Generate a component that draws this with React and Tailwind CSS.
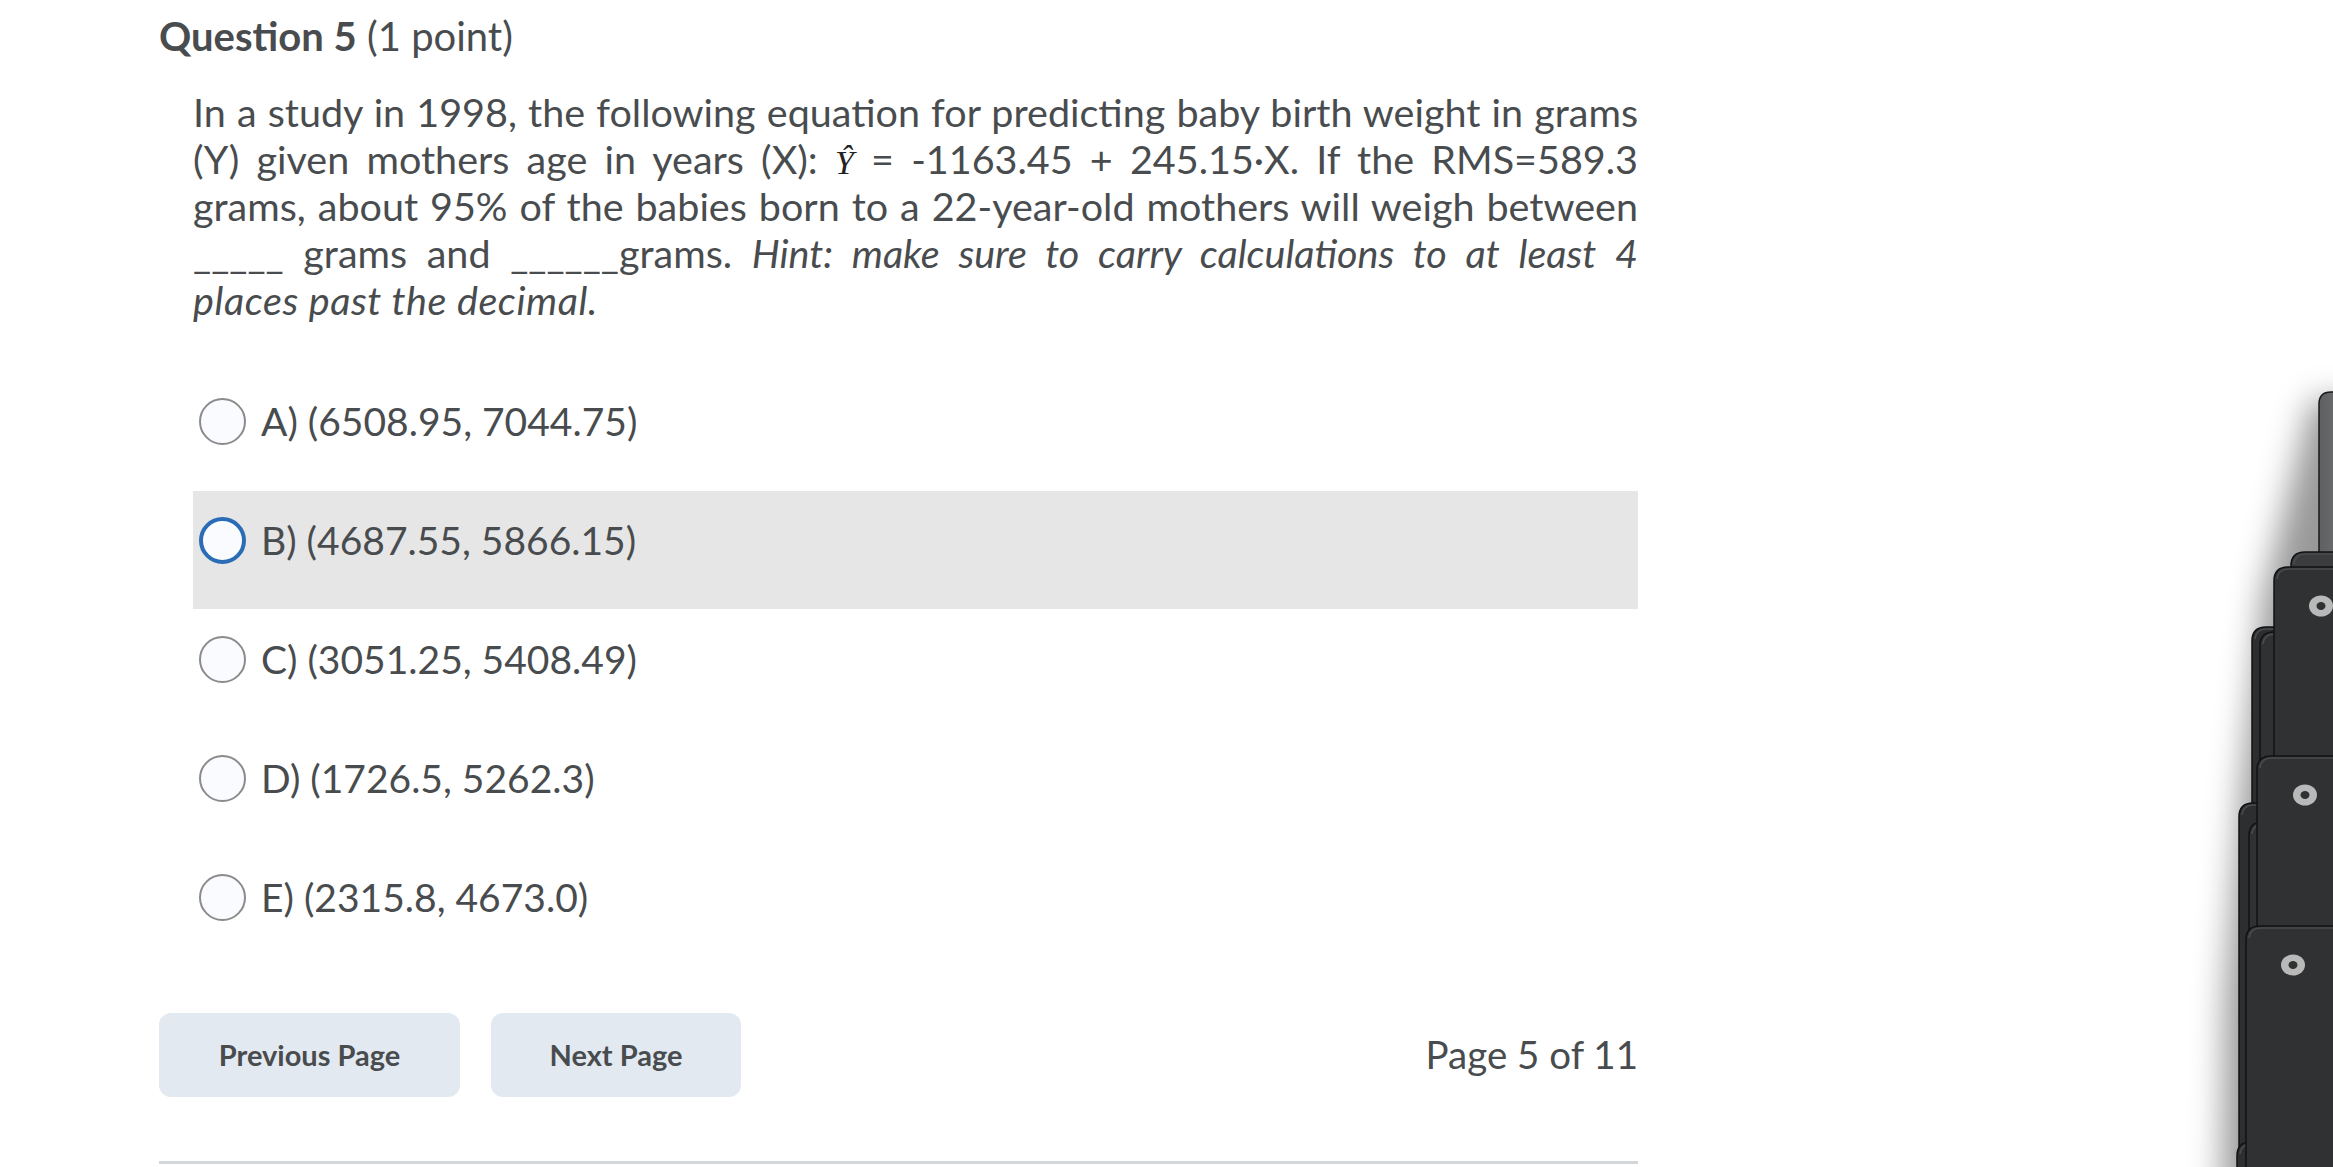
import React from 'react';

const options = [
  { id: 'A', label: 'A) (6508.95, 7044.75)' },
  { id: 'B', label: 'B) (4687.55, 5866.15)', hover: true },
  { id: 'C', label: 'C) (3051.25, 5408.49)' },
  { id: 'D', label: 'D) (1726.5, 5262.3)' },
  { id: 'E', label: 'E) (2315.8, 4673.0)' },
];

const Card = ({ x, y, fill = '#2f3133', ring }) => (
  <g>
    <path
      d={`M ${x} 1200 L ${x} ${y + 14} Q ${x} ${y} ${x + 14} ${y} L 2360 ${y} L 2360 1200 Z`}
      fill={fill}
      stroke="#111213"
      strokeWidth="1.5"
    />
    <path d={`M ${x + 3} ${y + 12} Q ${x + 4} ${y + 2} ${x + 15} ${y + 2} L 2360 ${y + 2}`} fill="none" stroke="#4a4c4e" strokeWidth="1.5" />
    {ring && (
      <g>
        <ellipse cx={ring[0]} cy={ring[1]} rx="12" ry="10.5" fill="#b9b9b9" />
        <ellipse cx={ring[0]} cy={ring[1]} rx="4.5" ry="4" fill="#2f3133" />
      </g>
    )}
  </g>
);

const DockStack = () => (
  <svg className="absolute right-0 top-0" width="180" height="1167" viewBox="2153 0 180 1167">
    <defs>
      <filter id="soft" x="-60%" y="-20%" width="220%" height="140%">
        <feGaussianBlur stdDeviation="16" />
      </filter>
      <linearGradient id="bar" x1="0" y1="0" x2="1" y2="0">
        <stop offset="0" stopColor="#5e5f60" />
        <stop offset="1" stopColor="#7b7c7d" />
      </linearGradient>
    </defs>
    <path d="M 2312 400 L 2262 600 L 2240 800 L 2225 1000 L 2222 1200 L 2360 1200 L 2360 400 Z" fill="rgba(0,0,0,0.4)" filter="url(#soft)" />
    <path d="M 2319 560 L 2319 404 Q 2319 392 2331 392 L 2360 392 L 2360 560 Z" fill="url(#bar)" stroke="#1a1a1a" strokeWidth="1.5" />
    <Card x={2291} y={552} fill="#3a3c3e" />
    <Card x={2252} y={627} fill="#2c2e30" />
    <Card x={2260} y={632} />
    <Card x={2274} y={567} ring={[2321, 606]} />
    <Card x={2239} y={803} fill="#2c2e30" />
    <Card x={2249} y={822} />
    <Card x={2257} y={756} ring={[2305, 795]} />
    <Card x={2237} y={1142} fill="#2c2e30" />
    <Card x={2246} y={926} ring={[2293, 965]} />
  </svg>
);

const App = () => {
  return (
    <div className="relative h-[1167px] w-[2333px] overflow-hidden bg-white font-['Lato',sans-serif] text-[#494c4e]">
      <div className="ml-[159px] w-[1479px] pt-[12px]">
        <h2 className="text-[40px] leading-[48px]">
          <span className="font-bold">Question 5</span> (1 point)
        </h2>

        {/* question text */}
        <div className="mt-[28px] pl-[34px] text-[39.5px] leading-[47px]">
          <div className="whitespace-nowrap text-justify [text-align-last:justify]">
            In a study in 1998, the following equation for predicting baby birth weight in grams
          </div>
          <div className="whitespace-nowrap text-justify [text-align-last:justify]">
            (Y) given mothers age in years (X):{' '}
            <span className="font-['Liberation_Serif',serif] text-[34px] italic leading-none text-[#222]">Ŷ</span> = -1163.45 + 245.15·X. If the RMS=589.3
          </div>
          <div className="whitespace-nowrap text-justify [text-align-last:justify]">
            grams, about 95% of the babies born to a 22-year-old mothers will weigh between
          </div>
          <div className="whitespace-nowrap text-justify [text-align-last:justify]">
            _____ grams and ______grams. <em>Hint: make sure to carry calculations to at least 4</em>
          </div>
          <div>
            <em className="tracking-[0.6px]">places past the decimal.</em>
          </div>
        </div>

        {/* answers */}
        <div className="mt-[49px] pl-[34px]">
          {options.map((opt) => (
            <div
              key={opt.id}
              className={
                opt.hover
                  ? 'mb-[1px] flex h-[118px] items-start gap-[15px] bg-[#e6e6e6] pl-[6px] pt-[26px]'
                  : 'mb-[1px] flex h-[118px] items-start gap-[15px] pl-[6px] pt-[26px]'
              }
            >
              <span
                className={
                  opt.hover
                    ? 'h-[47px] w-[47px] shrink-0 rounded-full border-[4px] border-[#2a6cb5] bg-[#f9fbff]'
                    : 'h-[47px] w-[47px] shrink-0 rounded-full border-2 border-[#8b8b8b] bg-[#f9fbff]'
                }
              />
              <span className="text-[39px] leading-[47px]">{opt.label}</span>
            </div>
          ))}
        </div>

        {/* pager */}
        <div className="mt-[47px] flex items-center">
          <button className="h-[84px] w-[301px] rounded-[12px] bg-[#e3e9f1] text-[29px] font-bold text-[#494c4e]">
            Previous Page
          </button>
          <button className="ml-[31px] h-[84px] w-[250px] rounded-[12px] bg-[#e3e9f1] text-[29px] font-bold text-[#494c4e]">
            Next Page
          </button>
          <div className="ml-auto text-[38.5px]">Page 5 of 11</div>
        </div>

        <div className="mt-[64px] h-[3px] bg-[#d3d6db]" />
      </div>

      <DockStack />
    </div>
  );
};

export default App;
